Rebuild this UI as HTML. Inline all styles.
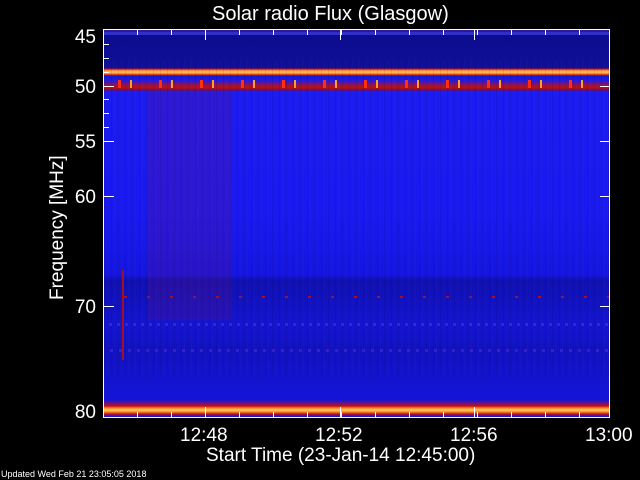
<!DOCTYPE html><html><head><style>
body{margin:0;background:#000;width:640px;height:480px;overflow:hidden;position:relative;font-family:"Liberation Sans",sans-serif;color:#fff}
div{position:absolute}
.t{font-size:19px;line-height:19px}
.yl{right:544px;text-align:right;font-size:19px;line-height:19px}
.tk{background:#fff}
</style></head><body>
<div class="t" style="left:212px;top:5px;font-size:20px">Solar radio Flux (Glasgow)</div>
<div id="p" style="left:104px;top:30px;width:506px;height:388px;background:linear-gradient(#2a1a9a 0,#2a1a9a 2px,#3030c8 2px,#3030c8 5px,#0c0c90 5px,#101098 38px,#c01020 39px,#ff7020 40px,#ffd060 42px,#ff7020 44px,#c01020 45px,#1818d0 46px,#1a1ae8 50px,#c01010 57px,#8a0a30 60px,#1c1cf0 61px,#1a1af0 180px,#1616e0 245px,#1010b0 250px,#1414d0 295px,#1212c0 320px,#1414d8 370px,#c01020 376px,#ff8020 378px,#ffd060 380px,#ff8020 382px,#c01020 384px,#1a1ad0 386px)"></div>
<div style="left:104px;top:60px;width:506px;height:316px;background:repeating-linear-gradient(90deg,rgba(0,0,60,0.1) 0,rgba(0,0,60,0.1) 1px,transparent 1px,transparent 3px,rgba(60,60,255,0.07) 3px,rgba(60,60,255,0.07) 4px,transparent 4px,transparent 7px)"></div>
<div style="left:148px;top:90px;width:84px;height:230px;background:rgba(110,20,110,0.22)"></div>
<div style="left:104px;top:80px;width:506px;height:8px;background:repeating-linear-gradient(90deg,transparent 0,transparent 14px,#ff3010 14px,#ff3010 17px,transparent 17px,transparent 26px,#ffa020 26px,#ffa020 28px,transparent 28px,transparent 41px)"></div>
<div style="left:104px;top:296px;width:506px;height:2px;background:repeating-linear-gradient(90deg,transparent 0,transparent 20px,#a01030 20px,#a01030 23px)"></div>
<div style="left:104px;top:323px;width:506px;height:3px;background:repeating-linear-gradient(90deg,transparent 0,transparent 5px,rgba(150,60,200,0.35) 5px,rgba(150,60,200,0.35) 8px)"></div>
<div style="left:104px;top:349px;width:506px;height:3px;background:repeating-linear-gradient(90deg,transparent 0,transparent 6px,rgba(150,60,200,0.3) 6px,rgba(150,60,200,0.3) 9px)"></div>
<div style="left:122px;top:270px;width:2px;height:90px;background:#a01020"></div>
<div style="left:103px;top:29px;width:507px;height:1px;background:#fff"></div>
<div style="left:103px;top:29px;width:1px;height:389px;background:#fff"></div>
<div style="left:609px;top:29px;width:1px;height:389px;background:#fff"></div>
<div style="left:103px;top:417px;width:507px;height:1px;background:#fff"></div>
<div class="yl" style="top:28px">45</div>
<div class="yl" style="top:78px">50</div>
<div class="yl" style="top:133px">55</div>
<div class="yl" style="top:188px">60</div>
<div class="yl" style="top:298px">70</div>
<div class="yl" style="top:403px">80</div>
<div class="tk" style="left:104px;top:86px;width:10px;height:1px"></div>
<div class="tk" style="left:104px;top:141px;width:10px;height:1px"></div>
<div class="tk" style="left:104px;top:196px;width:10px;height:1px"></div>
<div class="tk" style="left:104px;top:306px;width:10px;height:1px"></div>
<div class="tk" style="left:104px;top:44px;width:5px;height:1px"></div>
<div class="tk" style="left:104px;top:58px;width:5px;height:1px"></div>
<div class="tk" style="left:104px;top:72px;width:5px;height:1px"></div>
<div class="tk" style="left:104px;top:99px;width:5px;height:1px"></div>
<div class="tk" style="left:104px;top:113px;width:5px;height:1px"></div>
<div class="tk" style="left:104px;top:127px;width:5px;height:1px"></div>
<div class="tk" style="left:600px;top:86px;width:10px;height:1px"></div>
<div class="tk" style="left:600px;top:141px;width:10px;height:1px"></div>
<div class="tk" style="left:600px;top:196px;width:10px;height:1px"></div>
<div class="tk" style="left:600px;top:306px;width:10px;height:1px"></div>
<div class="tk" style="left:205px;top:407px;width:1px;height:10px"></div>
<div class="tk" style="left:340px;top:407px;width:1px;height:10px"></div>
<div class="tk" style="left:474px;top:407px;width:1px;height:10px"></div>
<div class="tk" style="left:205px;top:30px;width:1px;height:10px"></div>
<div class="tk" style="left:340px;top:30px;width:1px;height:10px"></div>
<div class="tk" style="left:474px;top:30px;width:1px;height:10px"></div>
<div style="left:104px;top:412px;width:506px;height:5px;background:repeating-linear-gradient(90deg,transparent 0,transparent 33px,#fff 33px,#fff 34px)"></div>
<div style="left:104px;top:30px;width:506px;height:5px;background:repeating-linear-gradient(90deg,transparent 0,transparent 33px,#fff 33px,#fff 34px)"></div>
<div style="left:47px;top:300px;transform:rotate(-90deg);transform-origin:0 0;font-size:19px;white-space:nowrap">Frequency [MHz]</div>
<div class="t" style="left:180px;top:426px">12:48</div>
<div class="t" style="left:315px;top:426px">12:52</div>
<div class="t" style="left:450px;top:426px">12:56</div>
<div class="t" style="left:585px;top:426px">13:00</div>
<div class="t" style="left:206px;top:446px">Start Time (23-Jan-14 12:45:00)</div>
<div style="left:1px;top:469px;font-size:9px">Updated Wed Feb 21 23:05:05 2018</div>
</body></html>
